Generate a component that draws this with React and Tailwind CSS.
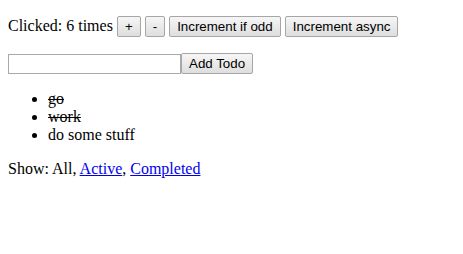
import React from 'react';

const btn =
  "inline-block align-baseline font-['Liberation_Sans',Arial,sans-serif] text-[13.333px] leading-[15px] text-black px-[7px] py-[2px] border border-[#a6a6a6] rounded-[2px] bg-gradient-to-b from-[#f6f6f6] to-[#dedede]";

export default function App() {
  const todos = [
    { text: 'go', completed: true },
    { text: 'work', completed: true },
    { text: 'do some stuff', completed: false },
  ];

  return (
    <div className="m-2 font-['Liberation_Serif','Times_New_Roman',serif] text-[16px] leading-[normal] text-black bg-white">
      <p className="my-4">
        Clicked: 6 times{' '}
        <button className={btn}>+</button>{' '}
        <button className={btn}>-</button>{' '}
        <button className={btn}>Increment if odd</button>{' '}
        <button className={btn}>Increment async</button>
      </p>
      <div className="flex items-center">
        <input className="w-[173px] h-[20px] border border-[#a9a9a9] bg-white px-[2px] outline-none" />
        <button className={btn}>Add Todo</button>
      </div>
      <ul className="my-4 pl-10 list-disc">
        {todos.map((todo, i) => (
          <li key={i} className={todo.completed ? 'line-through' : ''}>
            {todo.text}
          </li>
        ))}
      </ul>
      <p className="my-4">
        Show: All,{' '}
        <a href="#" className="text-[#0000ee] underline">Active</a>,{' '}
        <a href="#" className="text-[#0000ee] underline">Completed</a>
      </p>
    </div>
  );
}
